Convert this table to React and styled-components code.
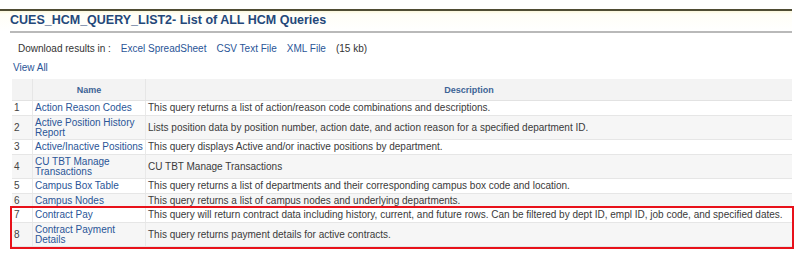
import React from 'react';
import styled, { createGlobalStyle } from 'styled-components';

const GlobalStyle = createGlobalStyle`
  body {
    margin: 0;
    background: #ffffff;
    font-family: "Liberation Sans", Arial, sans-serif;
  }
`;

const Page = styled.div`
  width: 805px;
  height: 268px;
  padding-top: 9px;
  box-sizing: border-box;
`;

const TitleBar = styled.div`
  width: 792px;
  border-top: 2px solid #4f4c33;
  background: linear-gradient(#fbf7dc 0px, #fffef6 3px, #ffffff 20px);
`;

const Title = styled.h1`
  margin: 0 0 0 10px;
  padding: 2px 0 0;
  height: 18px;
  font-size: 12.5px;
  font-weight: bold;
  color: #24487a;
  border-bottom: 2px solid #b9b9b9;
`;

const DownloadRow = styled.div`
  display: flex;
  align-items: center;
  gap: 10px;
  margin: 9px 0 0 18px;
  font-size: 10px;
  color: #333333;
  height: 13px;
`;

const Link = styled.a`
  color: #2a5597;
  text-decoration: none;
`;

const ViewAll = styled.div`
  margin: 7px 0 0 13px;
  font-size: 10px;
  height: 13px;
`;

const Table = styled.table`
  margin: 4px 0 0 12px;
  width: 780px;
  border-collapse: collapse;
  font-size: 10px;
  color: #3a3a3a;
`;

const HeadCell = styled.th`
  height: 21px;
  padding: 0;
  background: #f3f3f3;
  color: #3d6496;
  font-size: 9px;
  font-weight: bold;
  text-align: center;
  border-bottom: 1px solid #e2e2e2;
  border-left: 1px solid #e6e6e6;
  width: ${p => p.$w || 'auto'};
  &:first-child {
    border-left: none;
  }
`;

const Row = styled.tr`
  background: ${p => (p.$alt ? '#f6f6f6' : '#ffffff')};
`;

const Cell = styled.td`
  padding: 2px 2px 1.5px 2px;
  line-height: 10px;
  vertical-align: middle;
  border-bottom: 1px solid #e6e6e6;
  border-left: 1px solid #e9e9e9;
  &:first-child {
    border-left: none;
    color: #444444;
  }
`;

const Marked = styled.tbody`
  outline: 2.5px solid #e8111a;
  outline-offset: 0px;
`;

const rows = [
  ['Action Reason Codes', 'This query returns a list of action/reason code combinations and descriptions.'],
  ['Active Position History Report', 'Lists position data by position number, action date, and action reason for a specified department ID.'],
  ['Active/Inactive Positions', 'This query displays Active and/or inactive positions by department.'],
  ['CU TBT Manage Transactions', 'CU TBT Manage Transactions'],
  ['Campus Box Table', 'This query returns a list of departments and their corresponding campus box code and location.'],
  ['Campus Nodes', 'This query returns a list of campus nodes and underlying departments.'],
];

const marked = [
  ['Contract Pay', 'This query will return contract data including history, current, and future rows. Can be filtered by dept ID, empl ID, job code, and specified dates.'],
  ['Contract Payment Details', 'This query returns payment details for active contracts.'],
];

const QueryRow = ({ n, name, desc }) => (
  <Row $alt={n % 2 === 0}>
    <Cell>{n}</Cell>
    <Cell><Link href="#">{name}</Link></Cell>
    <Cell>{desc}</Cell>
  </Row>
);

export default function App() {
  return (
    <Page>
      <GlobalStyle />
      <TitleBar>
        <Title>CUES_HCM_QUERY_LIST2- List of ALL HCM Queries</Title>
      </TitleBar>
      <DownloadRow>
        <span>Download results in :</span>
        <Link href="#">Excel SpreadSheet</Link>
        <Link href="#">CSV Text File</Link>
        <Link href="#">XML File</Link>
        <span>(15 kb)</span>
      </DownloadRow>
      <ViewAll><Link href="#">View All</Link></ViewAll>
      <Table>
        <thead>
          <tr>
            <HeadCell $w="20px"></HeadCell>
            <HeadCell $w="112px">Name</HeadCell>
            <HeadCell>Description</HeadCell>
          </tr>
        </thead>
        <tbody>
          {rows.map((r, i) => (
            <QueryRow key={i} n={i + 1} name={r[0]} desc={r[1]} />
          ))}
        </tbody>
        <Marked>
          {marked.map((r, i) => (
            <QueryRow key={i} n={i + 7} name={r[0]} desc={r[1]} />
          ))}
        </Marked>
      </Table>
    </Page>
  );
}
